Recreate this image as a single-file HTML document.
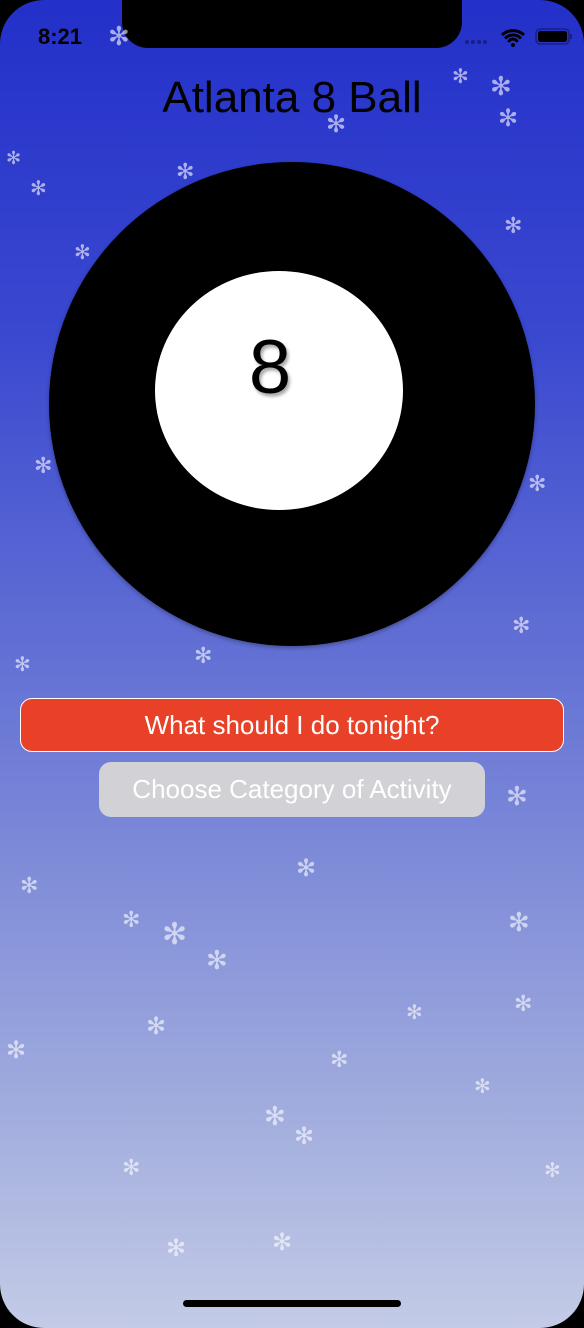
<!DOCTYPE html>
<html><head><meta charset="utf-8"><style>
html,body{margin:0;padding:0;background:#000}
.scr{position:relative;width:584px;height:1328px;overflow:hidden;border-radius:44px;background:linear-gradient(#2330c9 0%,#3a48d0 25%,#6c7ad6 55%,#9aa6dc 80%,#c3cbe6 100%);font-family:"Liberation Sans",sans-serif}
.notch{position:absolute;left:122px;top:-2px;width:340px;height:50px;background:#000;border-radius:0 0 26px 26px}
.s{position:absolute;color:rgba(255,255,255,.6);font-family:"DejaVu Sans",sans-serif;line-height:1}
.t{position:absolute;left:0;width:584px;text-align:center}
</style></head><body><div class="scr">
<div class="notch"></div>
<div style="position:absolute;left:38px;top:24px;font-size:22px;font-weight:bold;color:#000">8:21</div>
<svg style="position:absolute;left:462px;top:26px" width="112" height="22">
<g fill="#1a1f80"><circle cx="5" cy="16" r="2"/><circle cx="11" cy="16" r="2"/><circle cx="17" cy="16" r="2"/><circle cx="23" cy="16" r="2"/></g>
<path d="M40 9a16 16 0 0 1 22 0M43 12.5a11 11 0 0 1 16 0M46.5 16a5 5 0 0 1 9 0" stroke="#000" stroke-width="3" fill="none"/><circle cx="51" cy="19" r="2" fill="#000"/>
<rect x="74" y="3" width="33" height="15" rx="4" fill="none" stroke="#1a1f80" stroke-width="1.5"/><rect x="76" y="5" width="29" height="11" rx="2.5" fill="#000"/><rect x="108" y="8" width="2" height="5" fill="#1a1f80"/>
</svg>
<div class="t" style="top:73px;font-size:44px;color:#000">Atlanta 8 Ball</div>
<div class="s" style="left:108px;top:24px;font-size:26px">✻</div>
<div class="s" style="left:452px;top:66px;font-size:20px">✻</div>
<div class="s" style="left:490px;top:74px;font-size:26px">✻</div>
<div class="s" style="left:498px;top:106px;font-size:24px">✻</div>
<div class="s" style="left:326px;top:112px;font-size:24px">✻</div>
<div class="s" style="left:6px;top:150px;font-size:18px">✻</div>
<div class="s" style="left:30px;top:178px;font-size:20px">✻</div>
<div class="s" style="left:176px;top:162px;font-size:22px">✻</div>
<div class="s" style="left:504px;top:216px;font-size:22px">✻</div>
<div class="s" style="left:74px;top:242px;font-size:20px">✻</div>
<div class="s" style="left:34px;top:456px;font-size:22px">✻</div>
<div class="s" style="left:528px;top:474px;font-size:22px">✻</div>
<div class="s" style="left:512px;top:616px;font-size:22px">✻</div>
<div class="s" style="left:194px;top:646px;font-size:22px">✻</div>
<div class="s" style="left:14px;top:654px;font-size:20px">✻</div>
<div class="s" style="left:506px;top:784px;font-size:26px">✻</div>
<div class="s" style="left:20px;top:876px;font-size:22px">✻</div>
<div class="s" style="left:296px;top:856px;font-size:24px">✻</div>
<div class="s" style="left:122px;top:910px;font-size:22px">✻</div>
<div class="s" style="left:162px;top:920px;font-size:30px">✻</div>
<div class="s" style="left:206px;top:948px;font-size:26px">✻</div>
<div class="s" style="left:508px;top:910px;font-size:26px">✻</div>
<div class="s" style="left:146px;top:1014px;font-size:24px">✻</div>
<div class="s" style="left:406px;top:1002px;font-size:20px">✻</div>
<div class="s" style="left:514px;top:994px;font-size:22px">✻</div>
<div class="s" style="left:6px;top:1038px;font-size:24px">✻</div>
<div class="s" style="left:330px;top:1050px;font-size:22px">✻</div>
<div class="s" style="left:474px;top:1076px;font-size:20px">✻</div>
<div class="s" style="left:264px;top:1104px;font-size:26px">✻</div>
<div class="s" style="left:294px;top:1124px;font-size:24px">✻</div>
<div class="s" style="left:122px;top:1158px;font-size:22px">✻</div>
<div class="s" style="left:166px;top:1236px;font-size:24px">✻</div>
<div class="s" style="left:272px;top:1230px;font-size:24px">✻</div>
<div class="s" style="left:544px;top:1160px;font-size:20px">✻</div>
<div style="position:absolute;left:49px;top:162px;width:486px;height:484px;border-radius:50%;background:#000;box-shadow:0 2px 4px rgba(0,0,0,.3)"></div>
<div style="position:absolute;left:155px;top:271px;width:248px;height:239px;border-radius:50%;background:#fff"></div>
<div style="position:absolute;left:220px;top:330px;width:100px;text-align:center;font-size:76px;color:#000;line-height:1;text-shadow:2px 3px 3px rgba(0,0,0,.35)">8</div>
<div style="position:absolute;left:20px;top:698px;width:542px;height:52px;border:1px solid #fff;border-radius:12px;background:#e94128;color:#fff;font-size:26px;text-align:center;line-height:52px">What should I do tonight?</div>
<div style="position:absolute;left:99px;top:762px;width:386px;height:55px;border-radius:12px;background:#d1d1d6;color:#fff;font-size:26px;text-align:center;line-height:55px">Choose Category of Activity</div>
<div style="position:absolute;left:183px;top:1300px;width:218px;height:7px;border-radius:4px;background:#000"></div>
</div></body></html>
